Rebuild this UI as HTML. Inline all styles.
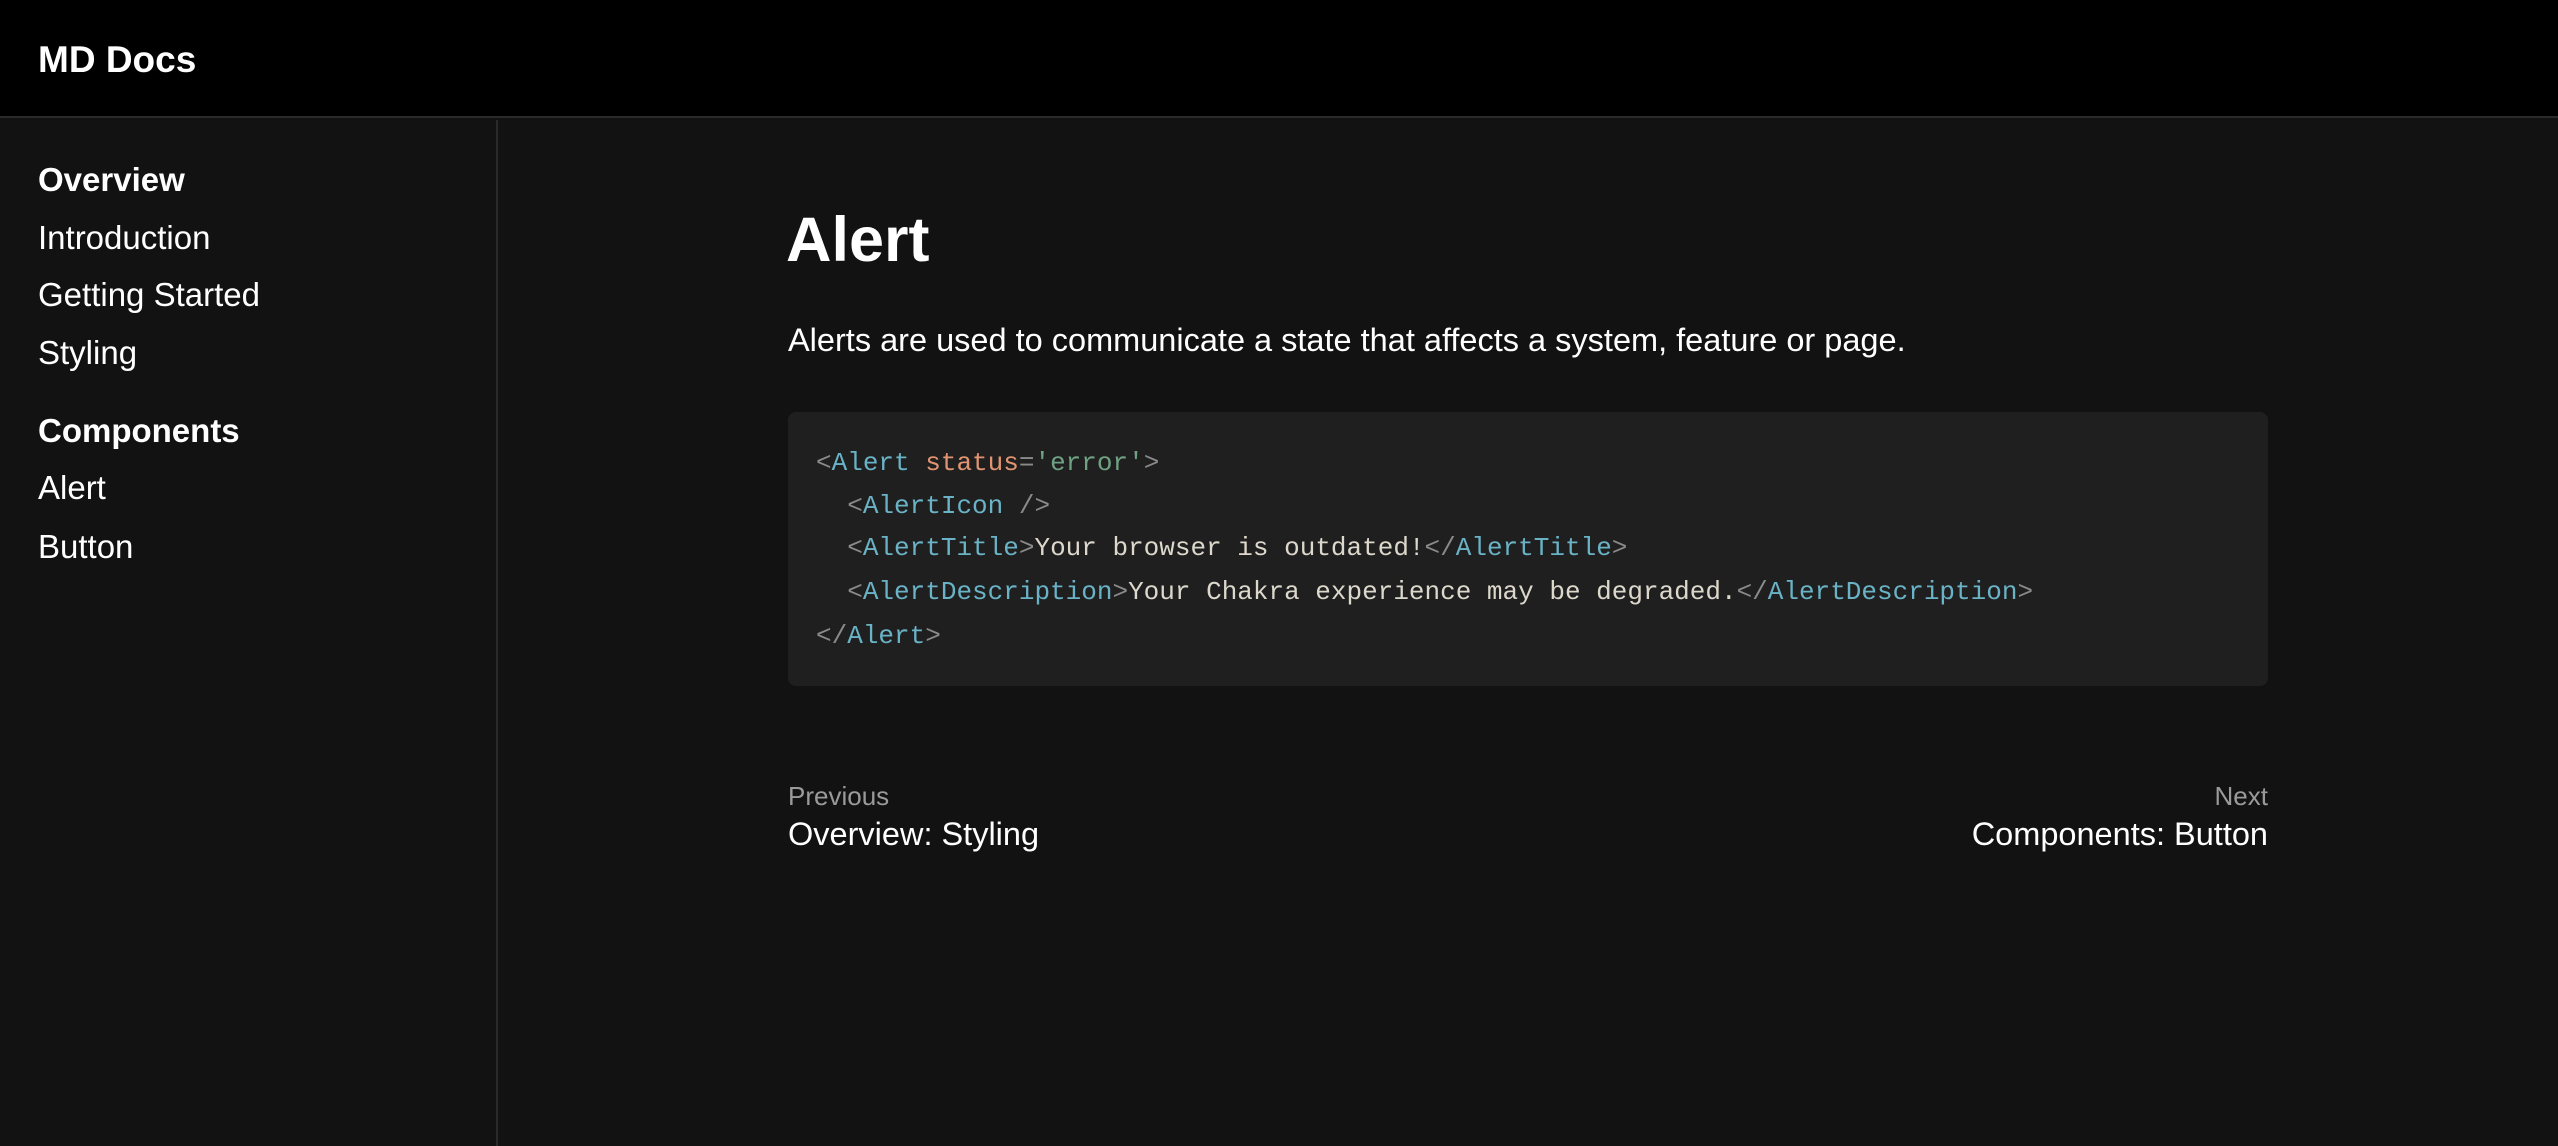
<!DOCTYPE html>
<html><head><meta charset="utf-8"><style>
*{margin:0;padding:0;box-sizing:border-box}
body{width:2558px;height:1146px;background:#121212;font-family:"Liberation Sans",sans-serif;color:#fff;position:relative;overflow:hidden}
.hdr{position:absolute;left:0;top:0;width:2558px;height:118px;background:#000;border-bottom:2px solid #2a2a2a}
.side{position:absolute;left:496px;top:120px;width:2px;height:1026px;background:#2a2a2a}
.t{position:absolute;line-height:1;white-space:pre}
.code{position:absolute;left:788px;top:412px;width:1480px;height:274px;background:#1f1f1f;border-radius:8px}
.c{font-family:"Liberation Mono",monospace;font-size:26px;color:#ddd8cc;left:816px}
.p{color:#8a8a8a}.g{color:#6ab3c6}.o{color:#e09472}.s{color:#6fa283}
</style></head><body>
<div class="hdr"></div>
<div class="side"></div>
<div class="t" style="left:38px;top:41px;font-size:37px;font-weight:bold">MD Docs</div>
<div class="t" style="left:38px;top:163px;font-size:33px;font-weight:bold">Overview</div>
<div class="t" style="left:38px;top:221px;font-size:33px">Introduction</div>
<div class="t" style="left:38px;top:278px;font-size:33px">Getting Started</div>
<div class="t" style="left:38px;top:336px;font-size:33px">Styling</div>
<div class="t" style="left:38px;top:414px;font-size:33px;font-weight:bold">Components</div>
<div class="t" style="left:38px;top:471px;font-size:33px">Alert</div>
<div class="t" style="left:38px;top:530px;font-size:33px">Button</div>
<div class="t" style="left:786px;top:209px;font-size:63px;font-weight:bold">Alert</div>
<div class="t" style="left:788px;top:324px;font-size:32.5px">Alerts are used to communicate a state that affects a system, feature or page.</div>
<div class="code"></div>
<div class="t c" style="top:450px"><span class="p">&lt;</span><span class="g">Alert</span> <span class="o">status</span><span class="p">=</span><span class="s">'error'</span><span class="p">&gt;</span></div>
<div class="t c" style="top:493px">  <span class="p">&lt;</span><span class="g">AlertIcon</span> <span class="p">/&gt;</span></div>
<div class="t c" style="top:535px">  <span class="p">&lt;</span><span class="g">AlertTitle</span><span class="p">&gt;</span>Your browser is outdated!<span class="p">&lt;/</span><span class="g">AlertTitle</span><span class="p">&gt;</span></div>
<div class="t c" style="top:579px">  <span class="p">&lt;</span><span class="g">AlertDescription</span><span class="p">&gt;</span>Your Chakra experience may be degraded.<span class="p">&lt;/</span><span class="g">AlertDescription</span><span class="p">&gt;</span></div>
<div class="t c" style="top:623px"><span class="p">&lt;/</span><span class="g">Alert</span><span class="p">&gt;</span></div>
<div class="t" style="left:788px;top:783px;font-size:26px;color:#9a9a9a">Previous</div>
<div class="t" style="left:788px;top:818px;font-size:32.5px">Overview: Styling</div>
<div class="t" style="right:290px;top:783px;font-size:26px;color:#9a9a9a;text-align:right">Next</div>
<div class="t" style="right:290px;top:818px;font-size:32.5px;text-align:right">Components: Button</div>
</body></html>
